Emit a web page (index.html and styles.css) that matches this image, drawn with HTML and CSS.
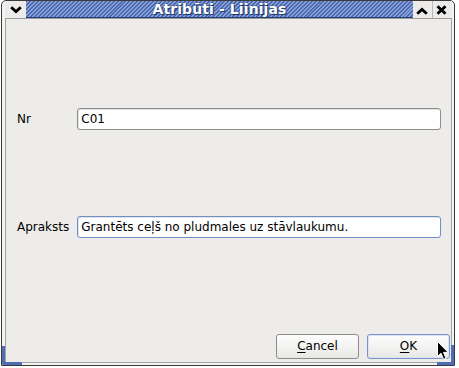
FILE: index.html
```html
<!DOCTYPE html>
<html>
<head>
<meta charset="utf-8">
<link rel="stylesheet" href="styles.css">
</head>
<body>
<div class="frame">
  <div class="titlebar">
    <div class="tbtn menu">
      <svg width="12" height="8" viewBox="0 0 12 8"><path d="M1.2 1.2 L6 5.6 L10.8 1.2" fill="none" stroke="#000" stroke-width="2.8"/></svg>
    </div>
    <div class="title">Atribūti - Liinijas</div>
    <div class="tbtn max">
      <svg width="12" height="8" viewBox="0 0 12 8"><path d="M1.2 6.8 L6 2.4 L10.8 6.8" fill="none" stroke="#000" stroke-width="2.8"/></svg>
    </div>
    <div class="tbtn close">
      <svg width="11" height="10" viewBox="0 0 11 10"><path d="M1.5 1.2 L9.5 8.8 M9.5 1.2 L1.5 8.8" fill="none" stroke="#000" stroke-width="2.8"/></svg>
    </div>
  </div>
  <div class="content">
    <div class="form">
      <label class="lbl">Nr</label>
      <div class="field">C01</div>
      <label class="lbl">Apraksts</label>
      <div class="field focus">Grantēts ceļš no pludmales uz stāvlaukumu.</div>
    </div>
    <div class="buttons">
      <div class="btn"><u>C</u>ancel</div>
      <div class="btn default"><u>O</u>K</div>
    </div>
  </div>
  <div class="grip grip-left"></div>
  <div class="grip grip-right"></div>
  <svg class="cursor" width="13" height="20" viewBox="0 0 13 20"><path d="M0.5 0.5 L0.5 15.5 L4 12.2 L6.6 18.3 L9 17.3 L6.5 11.4 L11.2 11.4 Z" fill="#000" stroke="#fff" stroke-width="1"/></svg>
</div>
</body>
</html>
```
FILE: styles.css
```css
html, body {
  margin: 0;
  padding: 0;
  background: #ffffff;
}
body {
  width: 459px;
  height: 368px;
  font-family: "DejaVu Sans", sans-serif;
  font-size: 12px;
  color: #000;
}
.frame {
  position: relative;
  margin-left: 1px;
  width: 454px;
  height: 366px;
  box-sizing: border-box;
  border: 1px solid #3a3a3a;
  border-radius: 5px 5px 0 0;
  padding: 0 2px 2px 3px;
  background: #f3f3f1;
  display: flex;
  flex-direction: column;
}
.titlebar {
  display: flex;
  height: 17px;
  border-bottom: 1px solid #9c9c9a;
  flex: none;
}
.tbtn {
  display: flex;
  align-items: center;
  justify-content: center;
  background: #ecebe9;
}
.tbtn.menu { width: 21px; }
.tbtn.max { width: 19px; border-right: 1px solid #b9b9b7; }
.tbtn.close { width: 19px; }
.tbtn.menu svg { margin-top: 1px; }
.tbtn.max svg { margin-top: 2px; margin-left: -2px; }
.tbtn.close svg { margin-top: 1px; margin-left: -2px; }
.title {
  flex: 1;
  text-align: center;
  color: #fff;
  font-weight: bold;
  font-size: 14px;
  line-height: 17px;
  background-color: #5274bd;
  background-image: repeating-linear-gradient(135deg, #4a69b0 0px, #4a69b0 1.4px, #88a2d8 1.4px, #88a2d8 2.8px);
  box-shadow: inset 0 -1px 0 #253d78;
  text-shadow: 0 0 2px #1d2f60, 1px 1px 0 #23396f;
  letter-spacing: 0.1px;
}
.content {
  flex: 1;
  display: flex;
  flex-direction: column;
  background: #edeceb;
  border: 1px solid #a3a3a1;
  border-top: none;
}
.form {
  display: grid;
  grid-template-columns: auto 1fr;
  column-gap: 8px;
  row-gap: 86px;
  align-items: center;
  margin-top: 89px;
  padding: 0 10px 0 11px;
}
.lbl {
  line-height: 15px;
}
.field {
  height: 22px;
  box-sizing: border-box;
  border: 1px solid #8e8e8c;
  border-radius: 3px;
  background: #fff;
  box-shadow: inset 1px 1px 0 #e2e2e2;
  padding: 0 3px;
  line-height: 20px;
  white-space: nowrap;
  overflow: hidden;
}
.field.focus {
  border-color: #6f8fc6;
}
.buttons {
  margin-top: auto;
  display: flex;
  justify-content: flex-end;
  gap: 8px;
  padding: 0 1px 3px 0;
}
.btn {
  width: 83px;
  height: 25px;
  box-sizing: border-box;
  border: 1px solid #8c8c8a;
  border-radius: 3px;
  background: linear-gradient(#fdfdfd, #f1f1ef 60%, #e6e6e4);
  text-align: center;
  line-height: 23px;
}
.btn u { text-decoration-thickness: 1px; text-underline-offset: 2px; }
.btn.default {
  border-color: #7a94c8;
  box-shadow: inset 0 0 0 1px #dbe4f4;
}
.grip {
  position: absolute;
  background: #4f6db5;
}
.grip-left {
  left: 0;
  bottom: 0;
  width: 20px;
  height: 19px;
  background: transparent;
  border-left: 3px solid #4f6db5;
  border-bottom: 3px solid #4f6db5;
  box-sizing: border-box;
  border-bottom-left-radius: 2px;
}
.grip-right {
  right: 0;
  bottom: 0;
  width: 17px;
  height: 20px;
  background: transparent;
  border-right: 3px solid #4f6db5;
  border-bottom: 3px solid #4f6db5;
  box-sizing: border-box;
}
.cursor {
  position: absolute;
  left: 435px;
  top: 340px;
}
```
